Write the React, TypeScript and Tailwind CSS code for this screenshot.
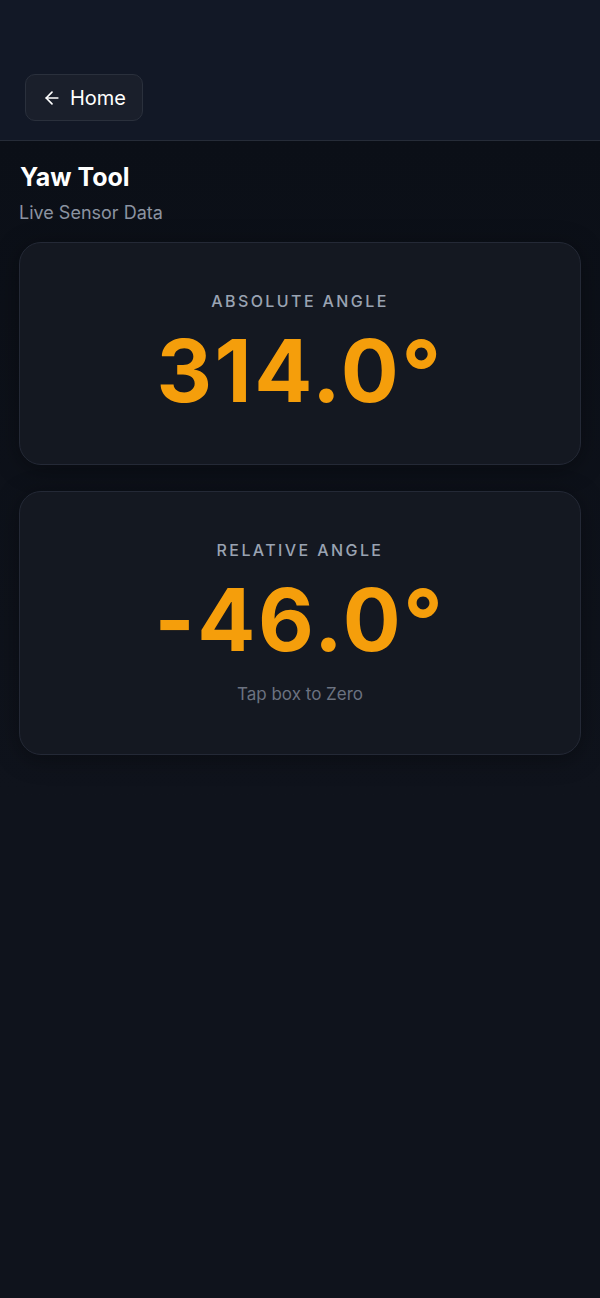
import { ArrowLeft } from "lucide-react"

function AngleCard({ label, value, hint }: { label: string; value: string; hint?: string }) {
  return (
    <div
      className={
        "flex flex-col items-center rounded-[22px] border border-[#242936] bg-[#141821] pt-[48px] shadow-[0_4px_24px_rgba(0,0,0,0.35)] " +
        (hint ? "pb-[48px]" : "pb-[50px]")
      }
    >
      <p className="text-[16px] leading-5 font-medium uppercase tracking-[0.15em] text-[#9aa3b2]">{label}</p>
      <p className="mt-[17px] text-[86px] leading-[86px] font-bold tracking-[0.03em] text-[#f59e0b]">{value}</p>
      {hint && <p className="mt-[19px] text-[17px] leading-6 text-[#6b7280]">{hint}</p>}
    </div>
  )
}

export default function App() {
  return (
    <div className="flex min-h-[1298px] w-full flex-col bg-[#0e121b] font-['Inter',sans-serif]">
      <header className="flex h-[141px] items-end border-b border-[#262c38] bg-[#121826] px-[25px] pb-[19px]">
        <button className="flex h-[47px] w-[118px] items-center justify-center gap-[8px] rounded-[10px] border border-[#2a303c] bg-[#1a1f2b] text-[20px] text-white">
          <ArrowLeft className="h-[20px] w-[20px]" strokeWidth={2} />
          Home
        </button>
      </header>

      <main className="flex flex-col bg-gradient-to-b from-[#0b0f17] to-[#0f131c] px-[19px] pb-10">
        <h1 className="mt-[20px] pl-[1px] text-[25px] leading-8 font-bold text-white">Yaw Tool</h1>
        <p className="mt-[8px] text-[18px] leading-6 text-[#8b93a1]">Live Sensor Data</p>

        <div className="mt-[17px] flex flex-col gap-[26px]">
          <AngleCard label="Absolute Angle" value="314.0°" />
          <AngleCard label="Relative Angle" value="-46.0°" hint="Tap box to Zero" />
        </div>
      </main>
      <div className="flex-1 bg-[#0f131c]" />
    </div>
  )
}
